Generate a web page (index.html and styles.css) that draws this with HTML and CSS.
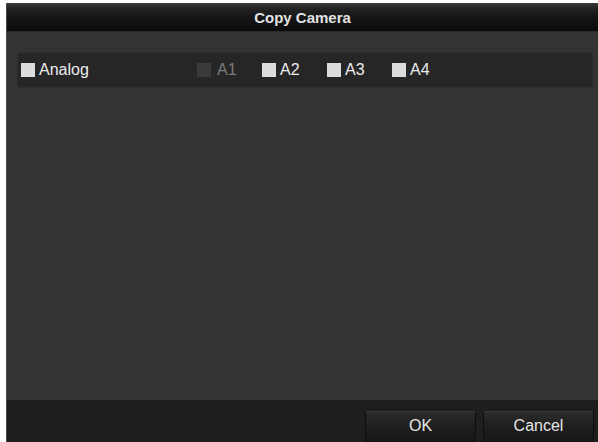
FILE: index.html
```html
<!DOCTYPE html>
<html>
<head>
<meta charset="utf-8">
<link rel="stylesheet" href="styles.css">
</head>
<body>
<div class="dialog">
  <div class="titlebar">Copy Camera</div>
  <div class="content">
    <div class="panel">
      <label class="group"><span class="box"></span><span class="lbl">Analog</span></label>
      <label class="item disabled"><span class="box"></span><span class="lbl">A1</span></label>
      <label class="item"><span class="box"></span><span class="lbl">A2</span></label>
      <label class="item"><span class="box"></span><span class="lbl">A3</span></label>
      <label class="item"><span class="box"></span><span class="lbl">A4</span></label>
    </div>
  </div>
  <div class="footer">
    <button class="btn">OK</button>
    <button class="btn">Cancel</button>
  </div>
</div>
</body>
</html>
```
FILE: styles.css
```css
html, body {
  margin: 0;
  padding: 0;
  background: #ffffff;
  width: 598px;
  height: 442px;
  overflow: hidden;
}
body {
  font-family: "Liberation Sans", Arial, sans-serif;
  font-size: 16px;
}
.dialog {
  margin: 3px 0 0 6px;
  width: 592px;
  height: 439px;
  display: flex;
  flex-direction: column;
  background: #333333;
  border-left: 1px solid #4a4a4a;
  box-sizing: border-box;
}
.titlebar {
  height: 29px;
  flex: none;
  display: flex;
  align-items: center;
  justify-content: center;
  color: #e2e2e2;
  font-weight: bold;
  font-size: 15px;
  background: linear-gradient(#3a3a3a 0, #222 20%, #141414 55%, #0b0b0b 100%);
  border-bottom: 1px solid #2a2a2a;
  box-sizing: border-box;
}
.content {
  flex: 1;
  padding: 20px 5px 0 10px;
}
.panel {
  height: 36px;
  box-sizing: border-box;
  background: #262626;
  border: 1px solid #2d2d2d;
  border-radius: 3px;
  display: flex;
  align-items: center;
  padding-left: 3px;
}
.group, .item {
  display: flex;
  align-items: center;
  color: #ececec;
}
.group {
  width: 176px;
}
.item {
  width: 65px;
}
.box {
  width: 14px;
  height: 14px;
  background: #dcdcdc;
  flex: none;
  margin-right: 4px;
}
.lbl {
  line-height: 16px;
}
.disabled .box {
  background: #3a3a3a;
}
.disabled .lbl {
  color: #7c7c7c;
  margin-left: 2px;
}
.footer {
  height: 42px;
  flex: none;
  background: #1e1e1e;
  border-top: 1px solid #1a1a1a;
  box-sizing: border-box;
  display: flex;
  justify-content: flex-end;
  align-items: flex-start;
  gap: 7px;
  padding: 10px 4px 0 0;
}
.btn {
  width: 111px;
  height: 36px;
  font-family: "Liberation Sans", Arial, sans-serif;
  font-size: 16px;
  color: #e6e6e6;
  background: linear-gradient(#2c2c2c, #1c1c1c 50%, #151515);
  border: 1px solid #0e0e0e;
  border-top-color: #3a3a3a;
  border-radius: 2px;
  padding: 0 0 6px 0;
}
```
